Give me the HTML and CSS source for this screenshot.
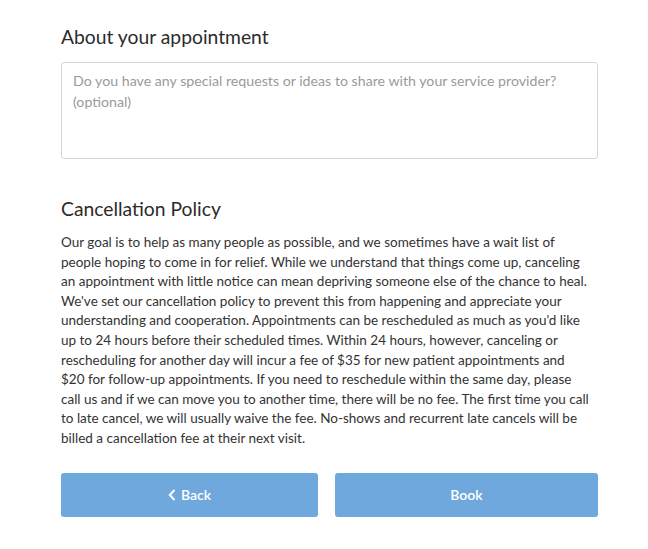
FILE: index.html
```html
<!DOCTYPE html>
<html>
<head>
<meta charset="utf-8">
<link rel="stylesheet" href="styles.css">
</head>
<body>
<main class="page">
  <h2 class="heading">About your appointment</h2>
  <div class="notes">
    <div class="placeholder">Do you have any special requests or ideas to share with your service provider? (optional)</div>
  </div>
  <h2 class="heading policy-heading">Cancellation Policy</h2>
  <p class="policy">Our goal is to help as many people as possible, and we sometimes have a wait list of<br>
people hoping to come in for relief. While we understand that things come up, canceling<br>
an appointment with little notice can mean depriving someone else of the chance to heal.<br>
We've set our cancellation policy to prevent this from happening and appreciate your<br>
understanding and cooperation. Appointments can be rescheduled as much as you'd like<br>
up to 24 hours before their scheduled times. Within 24 hours, however, canceling or<br>
rescheduling for another day will incur a fee of $35 for new patient appointments and<br>
$20 for follow-up appointments. If you need to reschedule within the same day, please<br>
call us and if we can move you to another time, there will be no fee. The first time you call<br>
to late cancel, we will usually waive the fee. No-shows and recurrent late cancels will be<br>
billed a cancellation fee at their next visit.</p>
  <div class="actions">
    <button class="btn"><svg class="chev" width="8" height="12" viewBox="0 0 8 12"><path d="M6.5 1 L1.8 6 L6.5 11" fill="none" stroke="#fff" stroke-width="2"/></svg>Back</button>
    <button class="btn">Book</button>
  </div>
</main>
</body>
</html>
```
FILE: styles.css
```css
html, body { margin: 0; padding: 0; background: #fff; }
body { font-family: Lato, "Liberation Sans", sans-serif; color: #333; }
.page { width: 537px; padding: 25px 0 0 61px; }
.heading { margin: 0; font-size: 19.3px; font-weight: 400; line-height: 24px; color: #2b2b2b; }
.notes { margin-top: 13px; border: 1px solid #d6d6d6; border-radius: 3px; box-sizing: border-box; height: 97px; padding: 7px 11px; }
.placeholder { font-size: 14.2px; line-height: 21px; color: #9a9a9a; }
.policy-heading { margin-top: 38px; }
.policy { margin: 12px 0 0; font-size: 13.5px; line-height: 19.6px; color: #333; white-space: nowrap; }
.actions { display: flex; gap: 17px; margin-top: 24px; }
.btn { flex: 1; height: 44px; border: 0; border-radius: 3px; background: #6ea8dc; color: #fff; font-family: inherit; font-size: 14px; font-weight: 600; display: flex; align-items: center; justify-content: center; gap: 5px; }
.btn:first-child { flex: 0 0 257px; }
.chev { display: block; }
```
